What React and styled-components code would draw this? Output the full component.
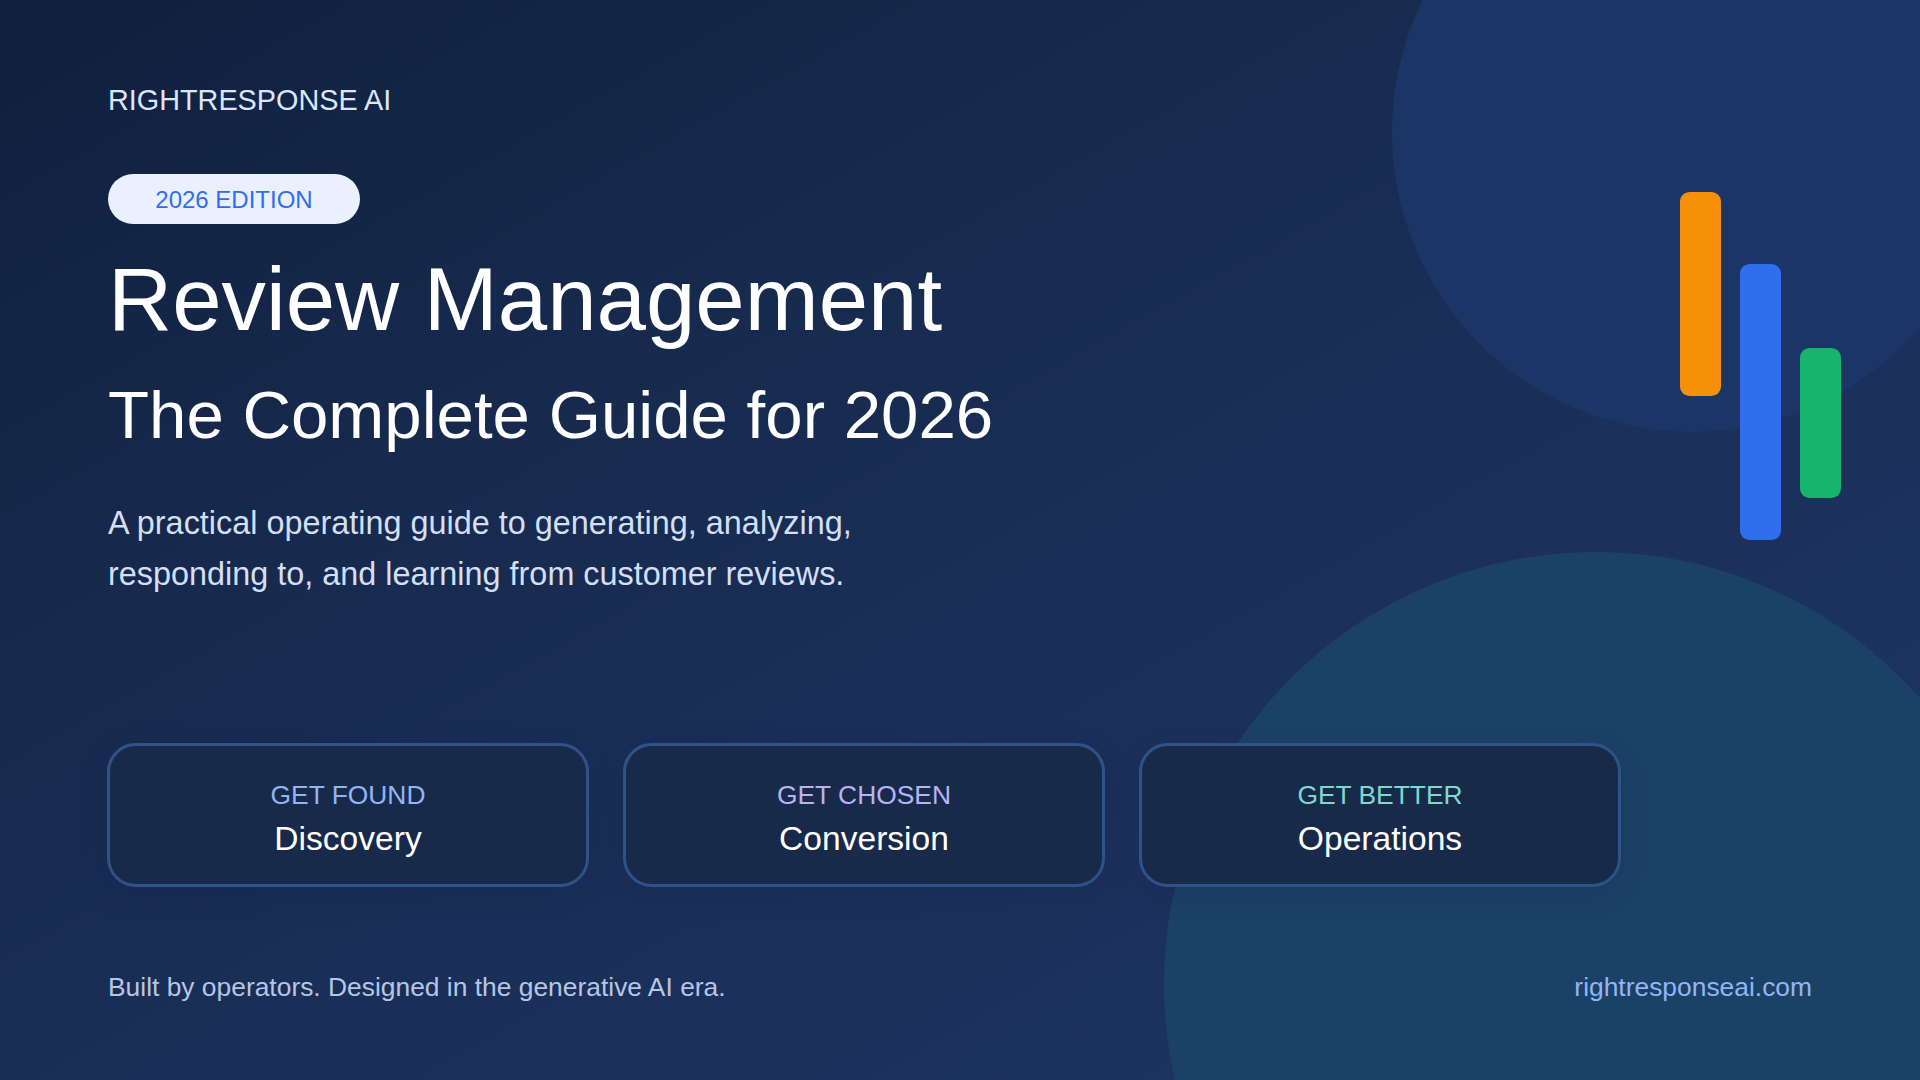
import React from 'react';
import styled, {createGlobalStyle} from "styled-components";

const GlobalStyle = createGlobalStyle`
	html, body {
		margin: 0;
		padding: 0;
		background: #13213f;
	}
	* {
		box-sizing: border-box;
	}
`;

const Page = styled.div`
	position: relative;
	width: 1920px;
	height: 1080px;
	overflow: hidden;
	padding: 85px 108px 0 108px;
	background: linear-gradient(to bottom right, #0f1f3d 0%, #16294c 28%, #1a2f57 55%, #1e3566 100%);
	font-family: "Liberation Sans", Arial, sans-serif;
`;

const Circle = styled.div`
	position: absolute;
	top: ${props => props.$top}px;
	left: ${props => props.$left}px;
	width: ${props => props.$size}px;
	height: ${props => props.$size}px;
	border-radius: 50%;
	background: ${props => props.$color};
`;

const BarGroup = styled.div`
	position: absolute;
	top: 192px;
	left: 1680px;
	display: flex;
	gap: 19.2px;
	align-items: flex-start;
`;

const Bar = styled.div`
	width: 40.8px;
	height: ${props => props.$height}px;
	margin-top: ${props => props.$offset}px;
	border-radius: 9.6px;
	background: ${props => props.$color};
`;

const Content = styled.div`
	position: relative;
	display: flex;
	flex-direction: column;
	align-items: flex-start;
`;

const Brand = styled.div`
	font-size: 28.8px;
	line-height: 31px;
	color: #dbe6fb;
`;

const Pill = styled.div`
	margin-top: 58px;
	width: 252px;
	height: 50.4px;
	border-radius: 25.2px;
	background: #eaf0fe;
	color: #2f6fed;
	font-size: 24px;
	line-height: 52px;
	text-align: center;
`;

const Title = styled.h1`
	margin: 26px 0 0 0;
	font-size: 88.8px;
	font-weight: 400;
	line-height: 100px;
	color: #ffffff;
`;

const Subtitle = styled.h2`
	margin: 27px 0 0 0;
	font-size: 67.2px;
	font-weight: 400;
	line-height: 76px;
	color: #ffffff;
`;

const Description = styled.p`
	margin: 45px 0 0 0;
	font-size: 32.4px;
	line-height: 50.4px;
	color: #d3dff5;
`;

const CardRow = styled.div`
	margin: 144px 0 0 -1px;
	display: grid;
	grid-template-columns: repeat(3, 482px);
	gap: 34px;
`;

const Card = styled.div`
	height: 144px;
	padding-top: 33px;
	border: 3px solid #2f5288;
	border-radius: 28.8px;
	background: #172a4a;
	box-shadow: 0 8px 28px rgba(15, 30, 60, 0.18);
	text-align: center;
`;

const CardLabel = styled.div`
	font-size: 26.4px;
	line-height: 32px;
	color: ${props => props.$color};
`;

const CardTitle = styled.div`
	margin-top: 8px;
	font-size: 33.6px;
	line-height: 40px;
	color: #ffffff;
`;

const Footer = styled.div`
	position: relative;
	margin-top: 84px;
	display: flex;
	justify-content: space-between;
	font-size: 26.4px;
	line-height: 32px;
	color: #b7c6e4;
`;

const SiteLink = styled.span`
	color: #93b4f5;
`;

const cards = [
	{label: "GET FOUND", title: "Discovery", color: "#93b4f5"},
	{label: "GET CHOSEN", title: "Conversion", color: "#b9b2f3"},
	{label: "GET BETTER", title: "Operations", color: "#7fd8cd"},
];

const App = () => {
	return (
		<Page>
			<GlobalStyle/>
			<Circle $top={-168} $left={1392} $size={600} $color="#1b3566"/>
			<Circle $top={552} $left={1164} $size={864} $color="#1c4167"/>
			<BarGroup>
				<Bar $height={204} $offset={0} $color="#f79009"/>
				<Bar $height={276} $offset={72} $color="#2f6fed"/>
				<Bar $height={150} $offset={156} $color="#16b46c"/>
			</BarGroup>
			<Content>
				<Brand>RIGHTRESPONSE AI</Brand>
				<Pill>2026 EDITION</Pill>
				<Title>Review Management</Title>
				<Subtitle>The Complete Guide for 2026</Subtitle>
				<Description>
					A practical operating guide to generating, analyzing,<br/>
					responding to, and learning from customer reviews.
				</Description>
				<CardRow>
					{cards.map(card => (
						<Card key={card.label}>
							<CardLabel $color={card.color}>{card.label}</CardLabel>
							<CardTitle>{card.title}</CardTitle>
						</Card>
					))}
				</CardRow>
			</Content>
			<Footer>
				<span>Built by operators. Designed in the generative AI era.</span>
				<SiteLink>rightresponseai.com</SiteLink>
			</Footer>
		</Page>
	);
};

export default App;
